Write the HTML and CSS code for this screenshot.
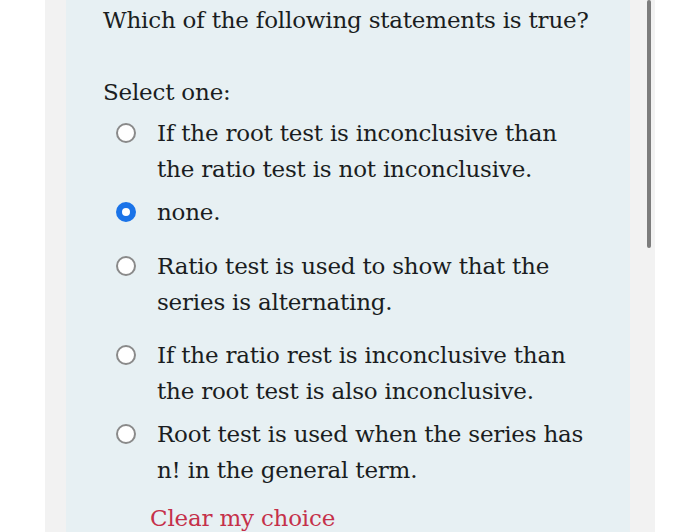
FILE: index.html
```html
<!DOCTYPE html>
<html>
<head>
<meta charset="utf-8">
<link rel="stylesheet" href="styles.css">
</head>
<body>
<div class="page">
  <div class="frame">
    <div class="panel">
      <div class="qtext">Which of the following statements is true?</div>
      <div class="prompt">Select one:</div>
      <div class="answers">
        <div class="opt o1"><span class="radio"></span><span class="label">If the root test is inconclusive than<br>the ratio test is not inconclusive.</span></div>
        <div class="opt o2"><span class="radio checked"></span><span class="label">none.</span></div>
        <div class="opt o3"><span class="radio"></span><span class="label">Ratio test is used to show that the<br>series is alternating.</span></div>
        <div class="opt o4"><span class="radio"></span><span class="label">If the ratio rest is inconclusive than<br>the root test is also inconclusive.</span></div>
        <div class="opt o5"><span class="radio"></span><span class="label">Root test is used when the series has<br>n! in the general term.</span></div>
      </div>
      <div class="clear">Clear my choice</div>
    </div>
  </div>
  <div class="scrollbar"></div>
</div>
</body>
</html>
```

FILE: styles.css
```css
html, body {
  margin: 0;
  padding: 0;
  background: #ffffff;
}
.page {
  position: relative;
  width: 700px;
  height: 532px;
  overflow: hidden;
}
.frame {
  margin-left: 45px;
  width: 610px;
  height: 532px;
  background: #f2f2f2;
  padding-left: 21px;
  padding-right: 25px;
  box-sizing: border-box;
}
.panel {
  height: 100%;
  background: #e7f0f3;
  padding-left: 37px;
  box-sizing: border-box;
  font-family: "DejaVu Serif", serif;
  color: #1a1d21;
  font-size: 23px;
  letter-spacing: -0.2px;
}
.qtext {
  line-height: 36px;
  padding-top: 2px;
}
.prompt {
  margin-top: 36px;
  line-height: 36px;
}
.answers {
  margin-top: 5px;
  padding-left: 13px;
}
.opt {
  display: flex;
  align-items: flex-start;
  line-height: 36px;
}
.o2 { margin-top: 7px; }
.o3 { margin-top: 18px; }
.o4 { margin-top: 17px; }
.o5 { margin-top: 7px; }
.radio {
  flex: none;
  width: 20px;
  height: 20px;
  box-sizing: border-box;
  border: 2px solid #8a8a8a;
  border-radius: 50%;
  background: #ffffff;
  margin-top: 8px;
  margin-right: 21px;
}
.radio.checked {
  border: 6px solid #1a73e8;
}
.clear {
  margin-top: 12px;
  padding-left: 47px;
  line-height: 36px;
  color: #c5304a;
}
.scrollbar {
  position: absolute;
  left: 647px;
  top: 0;
  width: 4px;
  height: 248px;
  background: #7d7d7d;
  border-radius: 2px;
}
```
